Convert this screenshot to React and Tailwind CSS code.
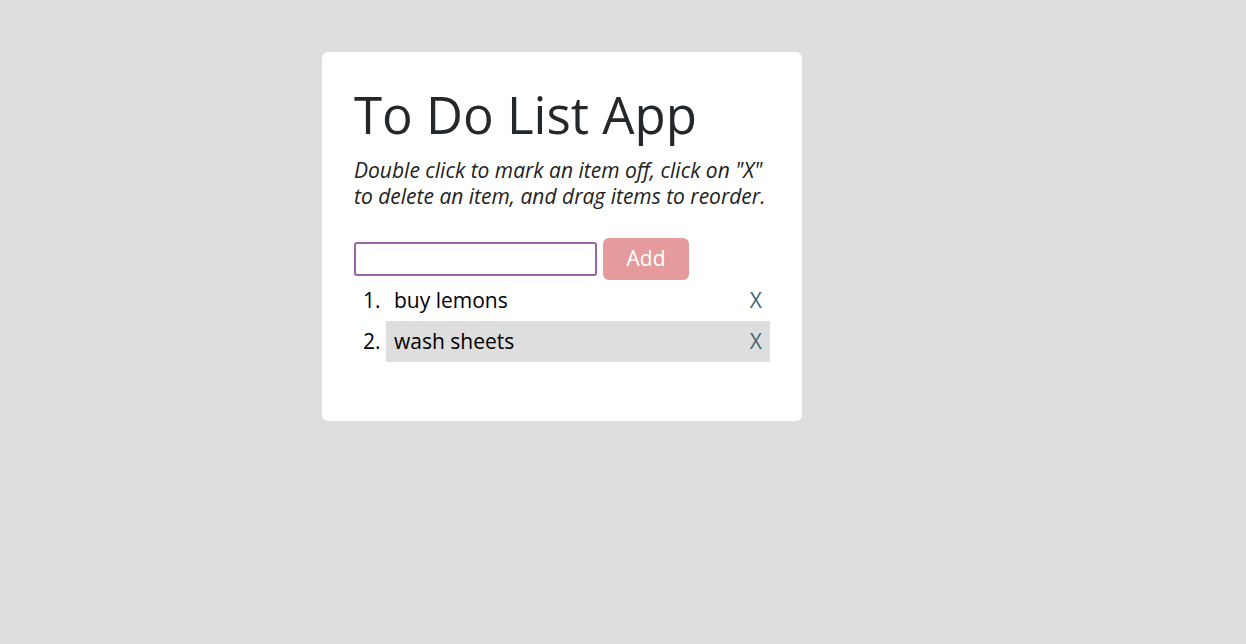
import { useState } from "react";

const initialItems = [
  { id: 1, text: "buy lemons" },
  { id: 2, text: "wash sheets" },
];

const App = () => {
  const [items, setItems] = useState(initialItems);
  const [text, setText] = useState("");

  const handleSubmit = (e) => {
    e.preventDefault();
    if (!text.trim()) return;
    setItems([...items, { id: Date.now(), text }]);
    setText("");
  };

  const handleDelete = (id) => {
    setItems(items.filter((item) => item.id !== id));
  };

  return (
    <div
      className="min-h-screen bg-[#dedede] pt-[52px] pl-[322px]"
      style={{ fontFamily: '"Open Sans", sans-serif' }}
    >
      <div className="w-[480px] rounded-[6px] bg-white px-8 pt-8 pb-[59px]">
        <h1 className="text-[51px] leading-[60px] text-[#25282b]">To Do List App</h1>
        <p className="mt-[13px] text-[21px] leading-[26px] italic text-[#222]">
          Double click to mark an item off, click on "X" to delete an item, and
          drag items to reorder.
        </p>

        <form onSubmit={handleSubmit} className="mt-[29px] flex items-center gap-[6px]">
          <input
            type="text"
            value={text}
            onChange={(e) => setText(e.target.value)}
            className="h-[34px] w-[243px] rounded-[3px] border-2 border-[#9a65a3] px-2 text-[18px] outline-none"
          />
          <button
            type="submit"
            className="h-[42px] w-[86px] rounded-[6px] bg-[#e59a9b] text-[21px] text-white"
          >
            Add
          </button>
        </form>

        <ol className="list-decimal pl-8 text-[21px] text-black">
          {items.map((item, index) => (
            <li
              key={item.id}
              className={`h-[41px] pl-2 pr-2 leading-[41px] ${
                index === 1 ? "bg-[#dedede]" : ""
              }`}
            >
              <div className="flex items-center justify-between">
                <span>{item.text}</span>
                <button
                  onClick={() => handleDelete(item.id)}
                  className="text-[#416677]"
                >
                  X
                </button>
              </div>
            </li>
          ))}
        </ol>
      </div>
    </div>
  );
};

export default App;
